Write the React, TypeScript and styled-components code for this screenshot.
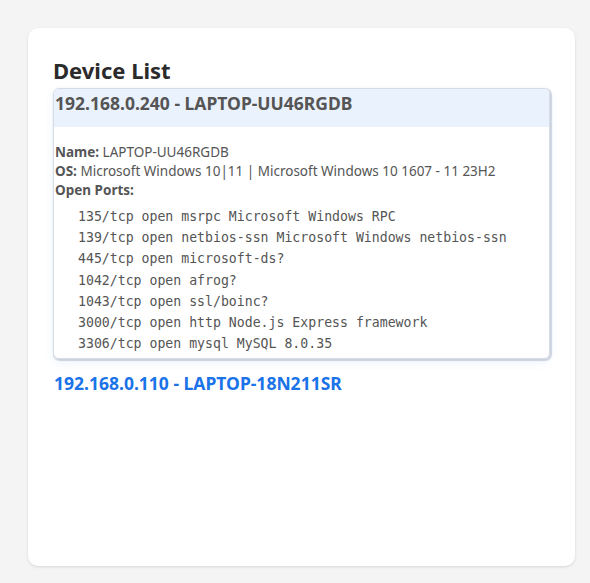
import React from "react";
import styled, { createGlobalStyle } from "styled-components";

const Global = createGlobalStyle`
  html, body { margin: 0; padding: 0; background: #f4f4f4; }
  body { font-family: "Noto Sans", "Open Sans", sans-serif; }
`;

const Page = styled.div`
  padding: 28px 15px 17px 28px;
`;

const Card = styled.div`
  background: #fff;
  border-radius: 10px;
  box-shadow: 0 1px 3px rgba(0, 0, 0, 0.12);
  padding: 24px 25px 0 25px;
  height: 538px;
  box-sizing: border-box;
`;

const Title = styled.h2`
  margin: 0;
  font-size: 22px;
  line-height: 36px;
  font-weight: 700;
  color: #2b2b2b;
`;

const List = styled.div`
  display: flex;
  flex-direction: column;
  gap: 10px;
`;

const Device = styled.div<{ $open?: boolean }>`
  border: ${(p) => (p.$open ? "1px solid #d6dce5" : "1px solid transparent")};
  border-radius: 6px;
  box-shadow: ${(p) =>
    p.$open ? "1px 1px 1px 1px rgba(150, 165, 185, 0.45), 0 4px 10px rgba(26, 115, 232, 0.07)" : "none"};
  overflow: hidden;
`;

const Header = styled.div<{ $open?: boolean }>`
  background: ${(p) => (p.$open ? "#eaf2fe" : "transparent")};
  color: ${(p) => (p.$open ? "#555" : "#1a73e8")};
  font-size: 17.5px;
  font-weight: 700;
  line-height: 26px;
  padding: ${(p) => (p.$open ? "1px 0 11px 1px" : "0")};
`;

const Body = styled.div`
  padding: 16px 1px 0 1px;
  color: #555;
  font-size: 13.5px;
  line-height: 19px;
`;

const Label = styled.b`
  font-weight: 700;
`;

const Ports = styled.pre`
  margin: 6px 0 4px 0;
  padding-left: 23px;
  font-family: "DejaVu Sans Mono", "Liberation Mono", monospace;
  font-size: 13.2px;
  line-height: 21.2px;
  color: #555;
`;

const ports = [
  "135/tcp open msrpc Microsoft Windows RPC",
  "139/tcp open netbios-ssn Microsoft Windows netbios-ssn",
  "445/tcp open microsoft-ds?",
  "1042/tcp open afrog?",
  "1043/tcp open ssl/boinc?",
  "3000/tcp open http Node.js Express framework",
  "3306/tcp open mysql MySQL 8.0.35",
];

export default function App() {
  return (
    <Page>
      <Global />
      <Card>
        <Title>Device List</Title>
        <List>
          <Device $open>
            <Header $open>192.168.0.240 - LAPTOP-UU46RGDB</Header>
            <Body>
              <div>
                <Label>Name:</Label> LAPTOP-UU46RGDB
              </div>
              <div>
                <Label>OS:</Label> Microsoft Windows 10|11 | Microsoft Windows 10 1607 - 11 23H2
              </div>
              <div>
                <Label>Open Ports:</Label>
              </div>
              <Ports>{ports.join("\n")}</Ports>
            </Body>
          </Device>
          <Device>
            <Header>192.168.0.110 - LAPTOP-18N211SR</Header>
          </Device>
        </List>
      </Card>
    </Page>
  );
}
